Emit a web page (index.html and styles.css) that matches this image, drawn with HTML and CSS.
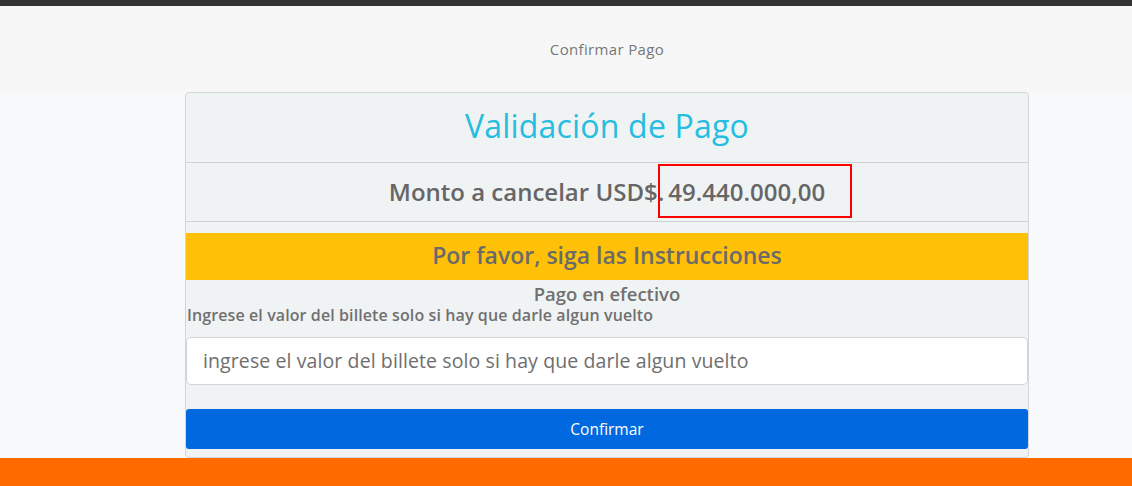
FILE: index.html
```html
<!DOCTYPE html>
<html lang="es">
<head>
<meta charset="utf-8">
<title>Confirmar Pago</title>
<link rel="stylesheet" href="styles.css">
</head>
<body>
<div class="topbar"></div>
<header class="header">Confirmar Pago</header>
<main class="main">
  <section class="card">
    <div class="card-title">Validación de Pago</div>
    <div class="card-amount"><span>Monto a cancelar USD$.</span><span class="amount">49.440.000,00</span></div>
    <div class="notice">Por favor, siga las Instrucciones</div>
    <div class="method">Pago en efectivo</div>
    <label class="field-label" for="billete">Ingrese el valor del billete solo si hay que darle algun vuelto</label>
    <input class="field" id="billete" type="text" placeholder="ingrese el valor del billete solo si hay que darle algun vuelto">
    <button class="btn" type="button">Confirmar</button>
  </section>
</main>
<footer class="footer"></footer>
</body>
</html>
```
FILE: styles.css
```css
* { box-sizing: border-box; }
html, body { margin: 0; padding: 0; }
body {
  font-family: "Open Sans", "Lato", sans-serif;
  background: #f8f9fa;
  color: #666;
  height: 486px;
  overflow: hidden;
  display: flex;
  flex-direction: column;
}
.topbar { height: 6px; background: #333333; }
.header {
  height: 86px;
  background: #f7f7f7;
  display: flex;
  align-items: center;
  justify-content: center;
  padding-left: 82px;
  font-size: 15px;
  letter-spacing: 0.35px;
  color: #74777a;
}
.main {
  flex: 1;
  padding-left: 185px;
}
.card {
  width: 844px;
  height: 366px;
  background: #f0f3f4;
  border: 1px solid #d3d6d9;
  border-radius: 4px;
  display: flex;
  flex-direction: column;
  overflow: hidden;
}
.card-title {
  height: 70px;
  padding-bottom: 5px;
  border-bottom: 1px solid #cfd2d5;
  display: flex;
  align-items: center;
  justify-content: center;
  font-size: 32px;
  letter-spacing: 0.2px;
  color: #25bde0;
  font-weight: 400;
}
.card-amount {
  height: 59px;
  padding-bottom: 2px;
  border-bottom: 1px solid #cfd2d5;
  display: flex;
  align-items: center;
  justify-content: center;
  gap: 4px;
  font-size: 24px;
  font-weight: 600;
  color: #666;
}
.amount {
  position: relative;
}
.amount::after {
  content: "";
  position: absolute;
  left: -10px;
  right: -27px;
  top: -11px;
  bottom: -10px;
  border: 2px solid #ff0000;
}
.notice {
  margin-top: 11px;
  height: 47px;
  padding-bottom: 3px;
  background: #ffc107;
  display: flex;
  align-items: center;
  justify-content: center;
  font-size: 23px;
  font-weight: 600;
  color: #6a6a6a;
}
.method {
  text-align: center;
  font-size: 18.5px;
  font-weight: 600;
  color: #707070;
  margin-top: 2px;
  line-height: 24px;
}
.field-label {
  font-size: 16px;
  font-weight: 600;
  color: #707070;
  line-height: 18px;
  padding-left: 1px;
  letter-spacing: 0.1px;
}
.field {
  margin-top: 13px;
  height: 48px;
  width: 100%;
  background: #fff;
  border: 1px solid #ced4da;
  border-radius: 5px;
  padding: 0 16px 2px;
  font-family: inherit;
  font-size: 19.5px;
  letter-spacing: 0.1px;
  color: #666;
}
.field::placeholder { color: #6e6e6e; }
.btn {
  margin-top: 24px;
  height: 40px;
  width: 100%;
  background: #0069e0;
  color: #fff;
  border: 0;
  border-radius: 3px;
  font-family: inherit;
  font-size: 15.5px;
}
.footer { height: 28px; background: #ff6a00; }
```
